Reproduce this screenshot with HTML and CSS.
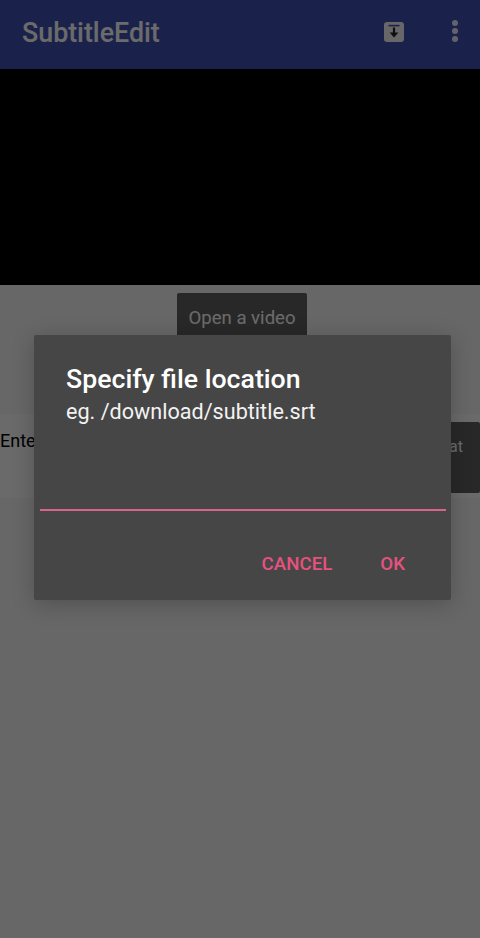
FILE: index.html
```html
<!DOCTYPE html>
<html lang="en">
<head>
<meta charset="utf-8">
<title>SubtitleEdit</title>
<link rel="stylesheet" href="styles.css">
</head>
<body>
<div class="app">
  <header class="appbar">
    <h1 class="appbar-title">SubtitleEdit</h1>
    <svg class="icon-save" viewBox="0 0 20 20" width="20" height="20" aria-hidden="true">
      <rect x="0" y="0" width="20" height="20" rx="3" fill="#fff"/>
      <path d="M4.5 3.6h11" stroke="#3f51b5" stroke-width="1.6" fill="none"/>
      <path d="M10 5.5v6.5" stroke="#222" stroke-width="2.2" fill="none"/>
      <path d="M5.6 10.6h8.8L10 15.4z" fill="#222"/>
    </svg>
    <svg class="icon-more" viewBox="0 0 6 22" width="6" height="22" aria-hidden="true">
      <circle cx="3" cy="3" r="3" fill="#efeaff"/>
      <circle cx="3" cy="11" r="3" fill="#efeaff"/>
      <circle cx="3" cy="19" r="3" fill="#efeaff"/>
    </svg>
  </header>
  <div class="video"></div>
  <main class="content">
    <button class="btn btn-open" type="button">Open a video</button>
    <div class="row">
      <div class="field">Enter</div>
      <button class="btn btn-format" type="button">Format</button>
    </div>
  </main>
  <div class="scrim"></div>
  <section class="dialog">
    <h2 class="dialog-title">Specify file location</h2>
    <p class="dialog-hint">eg. /download/subtitle.srt</p>
    <div class="dialog-input"></div>
    <div class="dialog-actions">
      <button class="action action-cancel" type="button">CANCEL</button>
      <button class="action action-ok" type="button">OK</button>
    </div>
  </section>
</div>
</body>
</html>
```

FILE: styles.css
```css
* { box-sizing: border-box; }
html, body { margin: 0; height: 100%; }
body { font-family: Roboto, "Liberation Sans", sans-serif; background: #fff; }

.app {
  position: relative;
  width: 480px;
  height: 938px;
  overflow: hidden;
  display: flex;
  flex-direction: column;
}

.appbar {
  height: 69px;
  flex: none;
  background: #3f51b5;
  display: flex;
  align-items: center;
  padding: 0 22px;
}
.appbar-title {
  margin: -4px 0 0;
  flex: 1;
  font-size: 26.8px;
  font-weight: 500;
  color: #fff;
}
.icon-save { margin-right: 48px; margin-top: -6px; opacity: .95; }
.icon-more { margin-top: -7px; }

.video { height: 216px; flex: none; background: #000; }

.content {
  flex: 1;
  background: #f6f6f6;
  padding-top: 8px;
  display: flex;
  flex-direction: column;
}

.btn {
  border: 0;
  border-radius: 2px;
  background: #5f5f5f;
  color: #fff;
  font-family: inherit;
  font-size: 18.6px;
}
.btn-open {
  align-self: flex-start;
  margin-left: 177px;
  width: 130px;
  height: 50px;
}

.row {
  margin-top: 71px;
  height: 84px;
  display: flex;
  align-items: flex-start;
  background: #fcfcfc;
}
.field {
  flex: 1;
  padding-top: 16px;
  font-size: 18px;
  line-height: 22px;
  color: #000;
}
.btn-format {
  width: 100px;
  height: 71px;
  margin-top: 8px;
  padding: 0 17px 22px 0;
  text-align: right;
  font-size: 16px;
}

.scrim {
  position: absolute;
  inset: 0;
  background: rgba(0, 0, 0, .58);
}

.dialog {
  position: absolute;
  left: 34px;
  top: 335px;
  width: 417px;
  height: 265px;
  background: #464646;
  border-radius: 2px;
  box-shadow: 0 4px 22px rgba(0, 0, 0, .22);
  padding: 27px 6px 0;
  display: flex;
  flex-direction: column;
}
.dialog-title {
  margin: 0 0 0 26px;
  font-size: 26.7px;
  line-height: 34px;
  font-weight: 500;
  color: #fff;
}
.dialog-hint {
  margin: 2px 0 0 26px;
  font-size: 21.6px;
  line-height: 28px;
  color: #f2f2f2;
}
.dialog-input {
  margin-top: 83px;
  width: 406px;
  height: 2px;
  background: #d8648c;
}
.dialog-actions {
  margin-top: 41px;
  display: flex;
  justify-content: flex-end;
  gap: 48px;
  padding-right: 40px;
}
.action {
  border: 0;
  padding: 0;
  background: none;
  font-family: inherit;
  font-size: 18.7px;
  line-height: 24px;
  font-weight: 500;
  color: #e6527f;
}
```
